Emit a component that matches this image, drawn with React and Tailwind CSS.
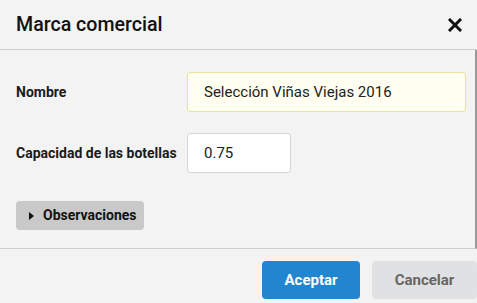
import React from 'react';

function CloseIcon() {
  return (
    <svg width="14" height="14" viewBox="0 0 14 14" className="block">
      <path d="M2 2 L12 12 M12 2 L2 12" stroke="#111" strokeWidth="3" strokeLinecap="square" />
    </svg>
  );
}

export default function App() {
  return (
    <div className="w-[477px] h-[303px] overflow-hidden bg-[#f3f3f3] flex flex-col font-['Roboto',sans-serif] text-[#1a1a1a]">
      {/* Header */}
      <div className="h-[50px] shrink-0 flex items-center justify-between pl-4 pr-[15px] border-b border-[#cfcfcf]">
        <h2 className="text-[19.6px] font-medium text-[#111] leading-none">Marca comercial</h2>
        <button className="p-0">
          <CloseIcon />
        </button>
      </div>

      {/* Body */}
      <div className="h-[199px] shrink-0 flex flex-col pl-4 pr-[9px] pt-[22px] border-b border-[#cfcfcf] border-r-2 border-r-[#999]">
        <div className="flex items-center">
          <label className="w-[171px] text-[14px] font-bold text-[#1a1a1a]">Nombre</label>
          <input
            readOnly
            value="Selección Viñas Viejas 2016"
            className="flex-1 h-10 px-4 text-[15px] text-[#222] bg-[#fefff0] border border-[#e9e2a3] rounded-[3px] outline-none"
          />
        </div>
        <div className="flex items-center mt-[21px]">
          <label className="w-[171px] text-[14px] font-bold text-[#1a1a1a] whitespace-nowrap">Capacidad de las botellas</label>
          <input
            readOnly
            value="0.75"
            className="w-[104px] h-10 px-4 text-[15px] text-[#222] bg-white border border-[#d6d6d6] rounded-[3px] outline-none"
          />
        </div>
        <div className="mt-[28px]">
          <button className="h-[29px] w-[128px] flex items-center gap-[9px] pl-[13px] bg-[#c9c9c9] rounded-[4px] text-[14px] font-bold text-[#111] whitespace-nowrap">
            <svg width="5" height="8" viewBox="0 0 5 8" className="block">
              <path d="M0 0 L5 4 L0 8 Z" fill="#111" />
            </svg>
            Observaciones
          </button>
        </div>
      </div>

      {/* Footer */}
      <div className="flex justify-end gap-3 pt-3 pr-0">
        <button className="h-[38px] w-[98px] rounded-[4px] bg-[#2185d0] text-white text-[15px] font-bold">Aceptar</button>
        <button className="h-[38px] w-[105px] rounded-[4px] bg-[#e0e1e2] text-[#666] text-[15px] font-bold">Cancelar</button>
      </div>
    </div>
  );
}
